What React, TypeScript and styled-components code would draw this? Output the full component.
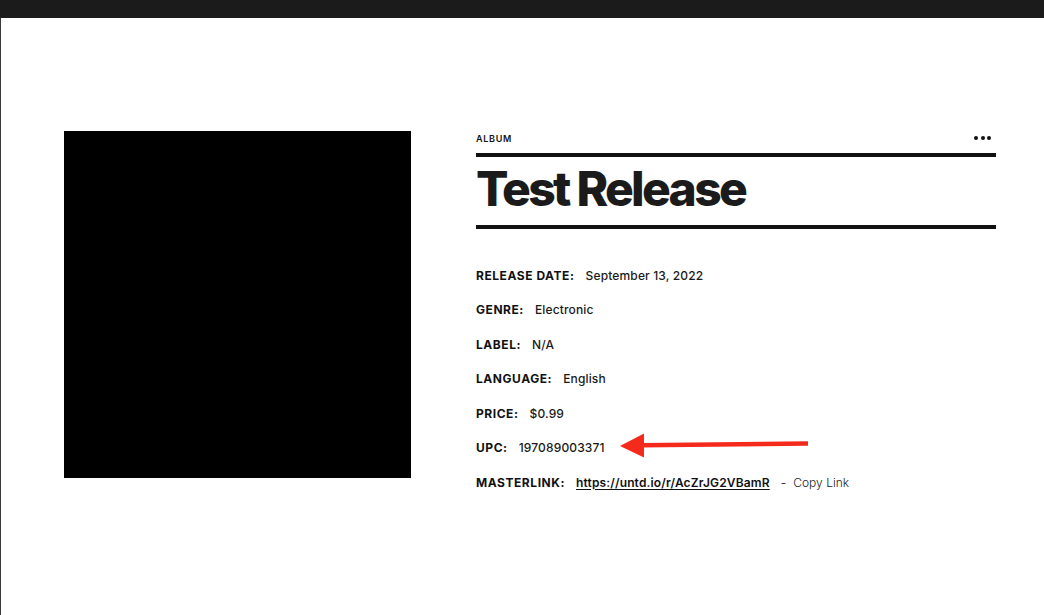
import React from 'react';
import styled, { createGlobalStyle } from 'styled-components';

const GlobalStyle = createGlobalStyle`
  html, body {
    margin: 0;
    padding: 0;
    background: #ffffff;
    font-family: Inter, "Noto Sans", "Liberation Sans", sans-serif;
    color: #151515;
  }
`;

const Page = styled.div`
  width: 1044px;
  height: 615px;
  display: flex;
  flex-direction: column;
  overflow: hidden;
`;

const TopBar = styled.div`
  height: 18px;
  flex: none;
  background: #1b1b1b;
`;

const Body = styled.div`
  flex: 1;
  border-left: 1px solid #3a3a3a;
  display: flex;
  align-items: flex-start;
  gap: 65px;
  padding: 113px 48px 0 63px;
`;

const Artwork = styled.div`
  width: 347px;
  height: 347px;
  flex: none;
  background: #000;
`;

const Info = styled.div`
  flex: 1;
  display: flex;
  flex-direction: column;
`;

const Header = styled.div`
  height: 14px;
  display: flex;
  align-items: center;
  justify-content: space-between;
  margin-bottom: 8px;
`;

const Kind = styled.span`
  font-size: 9px;
  font-weight: 600;
  letter-spacing: 0.7px;
  text-transform: uppercase;
  color: #111;
`;

const MoreButton = styled.button`
  display: flex;
  gap: 2.5px;
  padding: 0;
  margin-right: 5px;
  border: none;
  background: none;
  cursor: pointer;
`;

const Dot = styled.span`
  width: 4px;
  height: 4px;
  border-radius: 50%;
  background: #111;
`;

const Rule = styled.div`
  height: 4px;
  background: #111;
`;

const Title = styled.h1`
  margin: 8px 0 12px;
  font-size: 48px;
  line-height: 48px;
  font-weight: 800;
  letter-spacing: -2.7px;
  color: #1b1b1b;
`;

const Details = styled.dl`
  margin: 29px 0 0;
  display: flex;
  flex-direction: column;
`;

const Row = styled.div`
  position: relative;
  display: flex;
  align-items: center;
  height: 34.5px;
  font-size: 12px;
`;

const Label = styled.dt`
  font-weight: 700;
  letter-spacing: 0.55px;
  text-transform: uppercase;
  color: #111;
  margin-right: 11px;
`;

const Value = styled.dd`
  margin: 0;
  font-weight: 500;
  letter-spacing: 0.15px;
  color: #1a1a1a;
`;

const Link = styled.a`
  font-weight: 600;
  color: #111;
  text-decoration: underline;
  text-underline-offset: 2px;
`;

const Sep = styled.span`
  margin: 0 7px 0 11px;
  color: #333;
`;

const CopyLink = styled.button`
  padding: 0;
  border: none;
  background: none;
  font: inherit;
  font-weight: 300;
  color: #222;
  cursor: pointer;
`;

const Arrow = styled.svg`
  position: absolute;
  left: 143px;
  top: 0;
`;

const rows: [string, string][] = [
  ['Release Date:', 'September 13, 2022'],
  ['Genre:', 'Electronic'],
  ['Label:', 'N/A'],
  ['Language:', 'English'],
  ['Price:', '$0.99'],
  ['UPC:', '197089003371'],
];

const PointerArrow = () => (
  <Arrow width="192" height="30" viewBox="0 0 192 30">
    <line x1="22" y1="14.2" x2="189" y2="12.6" stroke="#f42a1d" strokeWidth="4.5" />
    <polygon points="1,15 25,2.5 25,26.5" fill="#f42a1d" />
  </Arrow>
);

export default function App() {
  return (
    <Page>
      <GlobalStyle />
      <TopBar />
      <Body>
        <Artwork />
        <Info>
          <Header>
            <Kind>Album</Kind>
            <MoreButton aria-label="More">
              <Dot />
              <Dot />
              <Dot />
            </MoreButton>
          </Header>
          <Rule />
          <Title>Test Release</Title>
          <Rule />
          <Details>
            {rows.map(([label, value]) => (
              <Row key={label}>
                <Label>{label}</Label>
                <Value>{value}</Value>
                {label === 'UPC:' && <PointerArrow />}
              </Row>
            ))}
            <Row>
              <Label>Masterlink:</Label>
              <Value>
                <Link href="#">https://untd.io/r/AcZrJG2VBamR</Link>
              </Value>
              <Sep>-</Sep>
              <CopyLink>Copy Link</CopyLink>
            </Row>
          </Details>
        </Info>
      </Body>
    </Page>
  );
}
